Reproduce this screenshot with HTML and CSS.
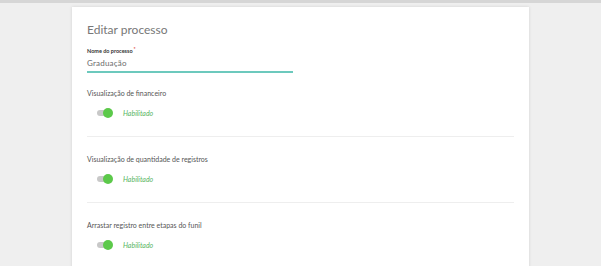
FILE: index.html
```html
<!DOCTYPE html>
<html lang="pt-BR">
<head>
<meta charset="utf-8">
<title>Editar processo</title>
<link rel="stylesheet" href="styles.css">
</head>
<body>
<div class="topbar"></div>
<main class="card">
  <h1 class="title">Editar processo</h1>
  <div class="field">
    <label class="field-label">Nome do processo<span class="req">*</span></label>
    <div class="field-input">Graduação</div>
  </div>
  <section class="setting">
    <div class="setting-label">Visualização de financeiro</div>
    <div class="toggle-row">
      <span class="toggle"><span class="knob"></span></span>
      <span class="toggle-text">Habilitado</span>
    </div>
  </section>
  <section class="setting">
    <div class="setting-label">Visualização de quantidade de registros</div>
    <div class="toggle-row">
      <span class="toggle"><span class="knob"></span></span>
      <span class="toggle-text">Habilitado</span>
    </div>
  </section>
  <section class="setting last">
    <div class="setting-label">Arrastar registro entre etapas do funil</div>
    <div class="toggle-row">
      <span class="toggle"><span class="knob"></span></span>
      <span class="toggle-text">Habilitado</span>
    </div>
  </section>
</main>
</body>
</html>
```
FILE: styles.css
```css
html, body {
  margin: 0;
  padding: 0;
  background: #efefef;
  font-family: "Lato", "Open Sans", sans-serif;
  overflow: hidden;
}
.topbar {
  height: 3px;
  background: #d6d6d6;
}
.card {
  margin: 4px 0 0 72px;
  width: 427px;
  padding: 15px 15px 20px 15px;
  background: #ffffff;
  box-shadow: 0 0 3px rgba(0,0,0,0.12);
  min-height: 300px;
}
.title {
  margin: 0;
  font-size: 12px;
  line-height: 16px;
  font-weight: 400;
  color: #777777;
}
.field {
  margin-top: 9px;
  width: 206px;
}
.field-label {
  display: block;
  font-size: 5.5px;
  line-height: 8px;
  height: 8px;
  font-weight: 700;
  color: #333333;
}
.req {
  color: #e04848;
  vertical-align: top;
  font-size: 5px;
  line-height: 5px;
  margin-left: 1px;
}
.field-input {
  margin-top: 3px;
  font-size: 8px;
  line-height: 11px;
  color: #6a6a6a;
  border-bottom: 2px solid #6cc9bd;
  padding-bottom: 2px;
  letter-spacing: 0.2px;
}
.setting {
  padding-top: 15px;
  padding-bottom: 18px;
  border-bottom: 1px solid #eeeeee;
}
.setting + .setting {
  padding-top: 17px;
}
.setting.last {
  border-bottom: none;
}
.setting-label {
  font-size: 7px;
  line-height: 10px;
  color: #555555;
}
.toggle-row {
  margin-top: 10px;
  height: 10px;
  display: flex;
  align-items: center;
}
.toggle {
  position: relative;
  margin-left: 10px;
  width: 15px;
  height: 6px;
  border-radius: 3px;
  background: #c8c8c8;
}
.knob {
  position: absolute;
  right: -1px;
  top: -2px;
  width: 10px;
  height: 10px;
  border-radius: 50%;
  background: #5cc94a;
}
.toggle-text {
  margin-left: 11px;
  font-size: 7px;
  line-height: 10px;
  font-style: italic;
  color: #58b563;
}
```
